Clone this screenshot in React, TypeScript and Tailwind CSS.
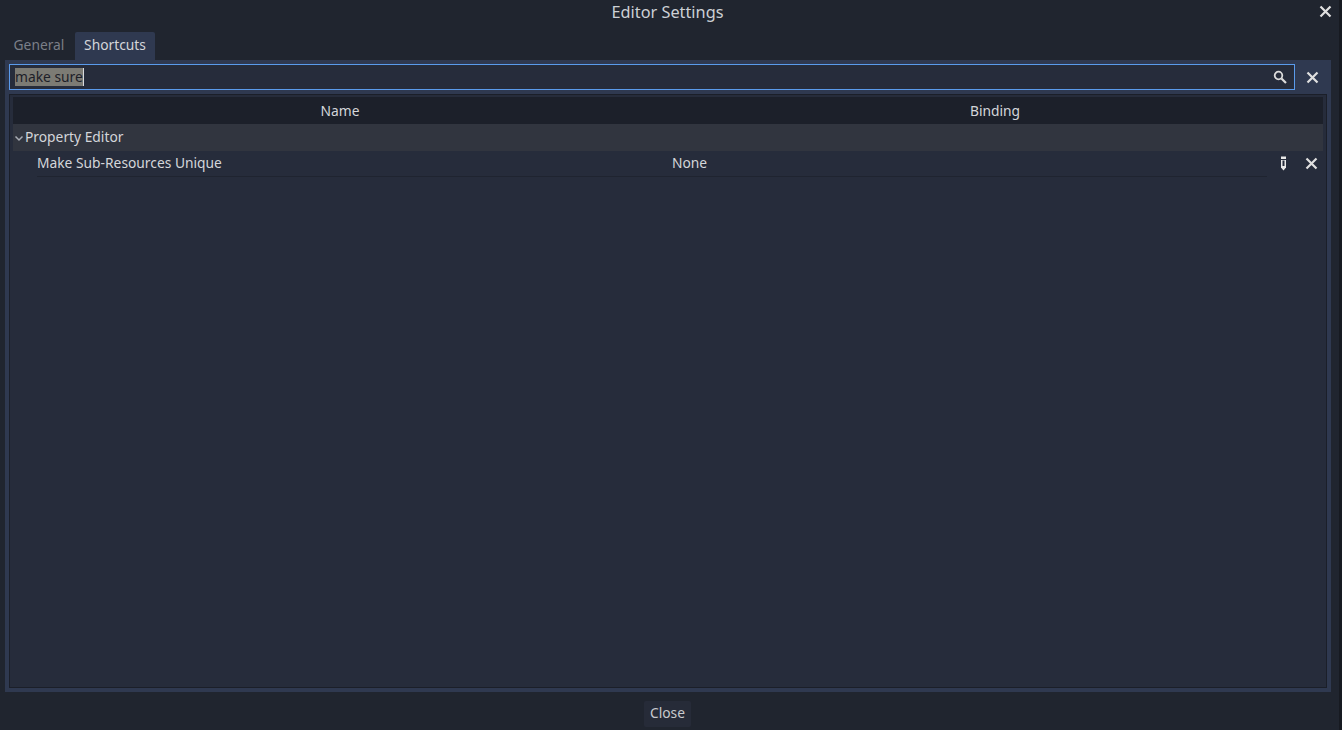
import React from 'react';

const CrossIcon: React.FC = () => (
  <svg width="13" height="13" viewBox="0 0 13 13" fill="none">
    <path d="M1.5 1.5L11.5 11.5M11.5 1.5L1.5 11.5" stroke="#e0e0e0" strokeWidth="2.2" />
  </svg>
);

const SearchIcon: React.FC = () => (
  <svg width="14" height="14" viewBox="0 0 14 14" fill="none">
    <circle cx="5.5" cy="5.5" r="3.8" stroke="#dcdcdc" strokeWidth="1.8" />
    <path d="M8.5 8.5L13 13" stroke="#dcdcdc" strokeWidth="2.2" />
  </svg>
);

const PencilIcon: React.FC = () => (
  <svg width="7" height="15" viewBox="0 0 7 15" fill="none">
    <path d="M1 0.5H6V3H1Z" fill="#e8e8e8" />
    <path d="M1 4H6V11.5L3.5 14.5L1 11.5Z" fill="#e8e8e8" />
    <path d="M2.5 4.5H4.5V10H2.5Z" fill="#262c3b" />
  </svg>
);

const App: React.FC = () => {
  return (
    <div className="flex h-[730px] w-[1342px] flex-col overflow-hidden bg-[#20252f] font-['Noto_Sans',sans-serif] text-[13.8px] text-[#d4d6da]">
      <div className="flex min-h-0 flex-1 flex-col border-r-[3px] border-[#171a21]">
        <div className="relative h-[25px] shrink-0 pr-[4px] text-center text-[16.3px] leading-[24px] text-[#cdd0d5]">
          Editor Settings
          <div className="absolute right-[7px] top-[5px]">
            <CrossIcon />
          </div>
        </div>

        <div className="flex h-[35px] shrink-0 items-end pl-[5px]">
          <div className="flex h-[28px] w-[70px] items-center justify-center pb-[2px] pr-[2px] text-[#7b7f88]">General</div>
          <div className="flex h-[28px] w-[80px] items-center justify-center rounded-t-[2px] bg-[#2f3950] pb-[2px]">
            Shortcuts
          </div>
        </div>

        <div className="ml-[5px] mr-[8px] flex h-[632px] shrink-0 flex-col bg-[#2f3950] px-[4px] pb-[4px] pt-[4px]">
          <div className="flex h-[26px] shrink-0 items-center gap-[11px]">
            <div className="flex h-full min-w-0 flex-1 items-center justify-between border border-[#5a9bec] bg-[#262c3b] pl-[5px] pr-[7px]">
              <span className="flex items-center pb-[1px]">
                <span className="h-[18px] bg-[#7c7b74] leading-[18px] text-[#1d2028]">make sure</span>
                <span className="h-[18px] w-px bg-[#d8dade]" />
              </span>
              <SearchIcon />
            </div>
            <div className="mr-[8px] flex w-[13px] justify-center">
              <CrossIcon />
            </div>
          </div>

          <div className="mt-[4px] flex min-h-0 flex-1 flex-col border border-[#1b1f29] bg-[#262c3b] px-[3px] pt-[2px]">
            <div className="flex h-[27px] shrink-0 items-center bg-[#1c202a] pt-[1px]">
              <div className="w-[654px] text-center">Name</div>
              <div className="flex-1 text-center">Binding</div>
            </div>
            <div className="flex h-[27px] shrink-0 items-center bg-[#31353f] pl-[1px]">
              <svg width="10" height="10" viewBox="0 0 10 10" fill="none" className="mr-[1px]">
                <path d="M1.5 3.5L5 7L8.5 3.5" stroke="#a9adb5" strokeWidth="1.5" />
              </svg>
              Property Editor
            </div>
            <div className="flex h-[26px] shrink-0 items-center">
              <div className="ml-[24px] flex h-full w-[1230px] items-center border-b border-[#1f2430]">
                <span className="w-[635px]">Make Sub-Resources Unique</span>
                <span>None</span>
              </div>
              <div className="mb-[1px] ml-[13px] flex w-[7px] justify-center">
                <PencilIcon />
              </div>
              <div className="mb-[2px] ml-[18px]">
                <CrossIcon />
              </div>
            </div>
          </div>
        </div>

        <div className="flex flex-1 items-center justify-center pr-[4px] pt-[5px]">
          <button className="h-[26px] w-[47px] rounded-[2px] bg-[#262b38] text-center text-[#c8cace]">Close</button>
        </div>
      </div>
    </div>
  );
};

export default App;
